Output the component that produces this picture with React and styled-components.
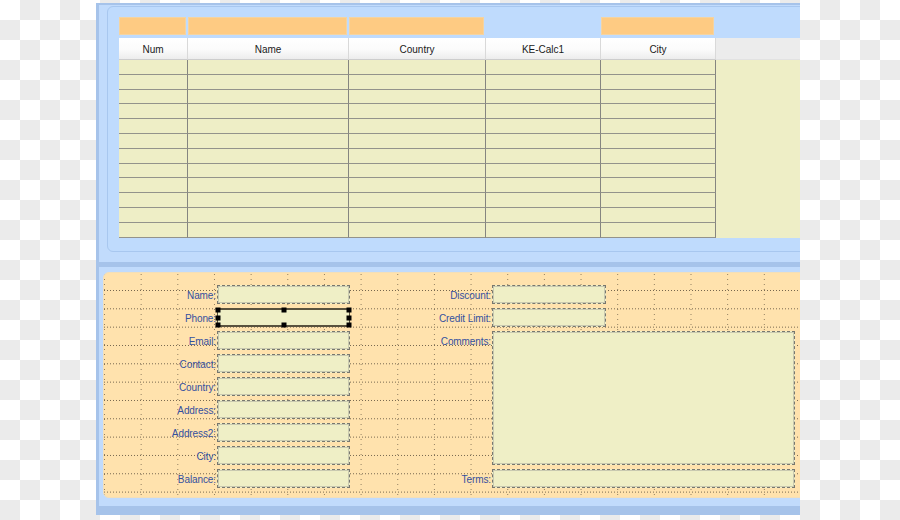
import React from 'react';
import styled, { createGlobalStyle } from 'styled-components';

const Global = createGlobalStyle`
  html, body { margin: 0; padding: 0; }
  body {
    width: 900px;
    height: 520px;
    overflow: hidden;
    background-color: #ffffff;
    background-image: conic-gradient(#ebebeb 25%, #ffffff 0 50%, #ebebeb 0 75%, #ffffff 0);
    background-size: 40px 40px;
    font-family: "Liberation Sans", Arial, sans-serif;
  }
`;

const Window = styled.div`
  box-sizing: border-box;
  margin: 3px 0 0 96px;
  width: 704px;
  height: 512px;
  background: #c1dbfc;
  border-left: 3px solid #a6c3ea;
  border-top: 2px solid #a6c3ea;
  border-bottom: 9px solid #a6c3ea;
  overflow: hidden;
  display: flex;
  flex-direction: column;
`;

const TopPanel = styled.section`
  box-sizing: border-box;
  height: 246px;
  margin: 1px -20px 0 8px;
  padding: 10px 0 0 11px;
  background: #bfdbfd;
  border: 1px solid #a8c7ef;
  border-radius: 6px;
  display: flex;
  flex-direction: column;
  flex-shrink: 0;
`;

const COLS = '69px 161px 137px 115px 115px';

const BarRow = styled.div`
  display: grid;
  grid-template-columns: ${COLS} 1fr;
  height: 18px;
  margin-bottom: 3px;
`;

const Bar = styled.div`
  box-sizing: border-box;
  margin-right: 2px;
  background: ${p => (p.$empty ? 'transparent' : '#fecb83')};
  border: ${p => (p.$empty ? 'none' : '1px solid #f4d4a2')};
`;

const HeaderRow = styled.div`
  display: grid;
  grid-template-columns: ${COLS} 1fr;
  height: 22px;
`;

const HeaderCell = styled.div`
  box-sizing: border-box;
  display: flex;
  align-items: center;
  justify-content: center;
  padding-top: 2px;
  font-size: 10px;
  color: #1a1a1a;
  background: ${p =>
    p.$filler ? '#ececec' : 'linear-gradient(#ffffff 0%, #fbfbfb 55%, #ededed 100%)'};
  border-right: ${p => (p.$filler ? 'none' : '1px solid #d9d9d9')};
  border-bottom: 1px solid ${p => (p.$filler ? '#e2e2e2' : '#cdcdcd')};
`;

const Body = styled.div`
  background: #eeeec6;
  height: 178px;
`;

const BodyGrid = styled.div`
  display: grid;
  grid-template-columns: ${COLS};
  grid-auto-rows: 14.8px;
  width: max-content;
`;

const Cell = styled.div`
  box-sizing: border-box;
  border-right: 1px solid #858580;
  border-bottom: 1px solid #93938b;
`;

const Splitter = styled.div`
  flex-shrink: 0;
  height: 5px;
  margin: 10px 0 5px;
  background: #a6c3ea;
`;

const BottomPanel = styled.section`
  box-sizing: border-box;
  flex-shrink: 0;
  height: 226px;
  margin: 0 -20px 0 4px;
  border: 1px solid #f3dfb9;
  border-radius: 6px;
  padding-top: 12px;
  background-color: #ffe2ad;
  background-image:
    conic-gradient(from 270deg at 1px 1px, rgba(70, 60, 45, 0.75) 90deg, transparent 0),
    conic-gradient(from 270deg at 1px 1px, rgba(70, 60, 45, 0.6) 90deg, transparent 0);
  background-size: 3px 18.333px, 36.667px 5px;
  background-position: 0 -1.33px, 0 1px;
`;

const FormGrid = styled.div`
  display: grid;
  grid-template-columns: 113px 133px 142px 114px 189px;
  grid-template-rows: repeat(9, 19px);
  row-gap: 4px;
`;

const Label = styled.div`
  grid-column: ${p => p.$col};
  grid-row: ${p => p.$row};
  display: flex;
  align-items: center;
  justify-content: flex-end;
  padding: 2px 1px 0 0;
  font-size: 10px;
  letter-spacing: -0.1px;
  color: #34509f;
  white-space: nowrap;
`;

const Field = styled.div`
  box-sizing: border-box;
  position: relative;
  grid-column: ${p => p.$col};
  grid-row: ${p => p.$row};
  background: #efefc6;
  border: 1px dashed #77776f;
  box-shadow: inset 0 0 0 1px #c9c9b0;
  ${p =>
    p.$selected &&
    `
    border: 1px solid #58523e;
    border-top-width: 2px;
    border-bottom-width: 2px;
    box-shadow: none;
  `}
`;

const Handle = styled.span`
  position: absolute;
  width: 5px;
  height: 5px;
  background: #000;
  left: ${p => p.$x};
  top: ${p => p.$y};
  transform: translate(-50%, -50%);
`;

const columns = [
  { name: 'Num', bar: true },
  { name: 'Name', bar: true },
  { name: 'Country', bar: true },
  { name: 'KE-Calc1', bar: false },
  { name: 'City', bar: true },
];

const leftFields = ['Name', 'Phone', 'Email', 'Contact', 'Country', 'Address', 'Address2', 'City', 'Balance'];

const handles = [
  ['0%', '0%'], ['50%', '0%'], ['100%', '0%'],
  ['0%', '50%'], ['100%', '50%'],
  ['0%', '100%'], ['50%', '100%'], ['100%', '100%'],
];

export default function App() {
  return (
    <>
      <Global />
      <Window>
        <TopPanel>
          <BarRow>
            {columns.map(c => (
              <Bar key={c.name} $empty={!c.bar} />
            ))}
          </BarRow>
          <HeaderRow>
            {columns.map(c => (
              <HeaderCell key={c.name}>{c.name}</HeaderCell>
            ))}
            <HeaderCell $filler />
          </HeaderRow>
          <Body>
            <BodyGrid>
              {Array.from({ length: 12 * 5 }).map((_, i) => (
                <Cell key={i} />
              ))}
            </BodyGrid>
          </Body>
        </TopPanel>
        <Splitter />
        <BottomPanel>
          <FormGrid>
            {leftFields.map((f, i) => (
              <React.Fragment key={f}>
                <Label $col={1} $row={i + 1}>{f}:</Label>
                <Field $col={2} $row={i + 1} $selected={f === 'Phone'}>
                  {f === 'Phone' &&
                    handles.map(([x, y]) => <Handle key={x + y} $x={x} $y={y} />)}
                </Field>
              </React.Fragment>
            ))}
            <Label $col={3} $row={1}>Discount:</Label>
            <Field $col={4} $row={1} />
            <Label $col={3} $row={2}>Credit Limit:</Label>
            <Field $col={4} $row={2} />
            <Label $col={3} $row={3}>Comments:</Label>
            <Field $col="4 / span 2" $row="3 / span 6" />
            <Label $col={3} $row={9}>Terms:</Label>
            <Field $col="4 / span 2" $row={9} />
          </FormGrid>
        </BottomPanel>
      </Window>
    </>
  );
}
